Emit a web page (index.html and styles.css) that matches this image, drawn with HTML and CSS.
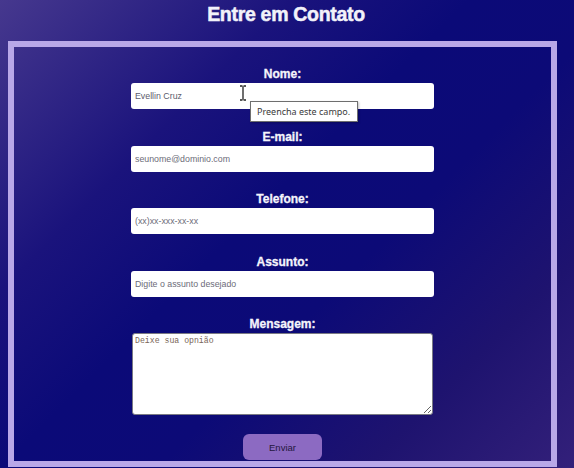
FILE: index.html
```html
<!DOCTYPE html>
<html lang="pt-BR">
<head>
<meta charset="utf-8">
<title>Entre em Contato</title>
<link rel="stylesheet" href="styles.css">
</head>
<body>
<h1 class="title">Entre em Contato</h1>
<form class="box">
  <div class="field">
    <label class="label" for="nome">Nome:</label>
    <div class="input-wrap">
      <input class="input" id="nome" type="text" value="Evellin Cruz">
      <svg class="cursor" width="8" height="16" viewBox="0 0 8 16"><path d="M1 1h2.5M4.5 1H7M4 1.5v13M1 15h2.5M4.5 15H7" stroke="#222" stroke-width="1.3" fill="none"/></svg>
      <div class="tooltip">Preencha este campo.</div>
    </div>
  </div>
  <div class="field">
    <label class="label" for="email">E-mail:</label>
    <input class="input" id="email" type="email" placeholder="seunome@dominio.com">
  </div>
  <div class="field">
    <label class="label" for="tel">Telefone:</label>
    <input class="input" id="tel" type="tel" placeholder="(xx)xx-xxx-xx-xx">
  </div>
  <div class="field">
    <label class="label" for="assunto">Assunto:</label>
    <input class="input" id="assunto" type="text" placeholder="Digite o assunto desejado">
  </div>
  <div class="field">
    <label class="label" for="msg">Mensagem:</label>
    <textarea class="textarea" id="msg" placeholder="Deixe sua opnião"></textarea>
  </div>
  <button class="button" type="submit">Enviar</button>
</form>
</body>
</html>
```
FILE: styles.css
```css
html, body {
  margin: 0;
  height: 100%;
}
body {
  background: linear-gradient(135deg, #46388e 0%, #1a137c 28%, #0b0a78 45%, #0c0a77 60%, #1e136f 80%, #33207a 100%);
  font-family: "Liberation Sans", Arial, sans-serif;
  overflow: hidden;
}
.title {
  margin: 0;
  font-size: 19.5px;
  line-height: 28px;
  font-weight: bold;
  text-align: center;
  color: #f2f2fa;
  letter-spacing: -0.3px;
  -webkit-text-stroke: 0.5px #f2f2fa;
  transform: translateX(-1px);
}
.box {
  box-sizing: border-box;
  width: 549px;
  height: 426px;
  margin: 13px 0 0 8px;
  border: 6px solid #b9a8e8;
  padding-top: 18px;
  display: flex;
  flex-direction: column;
  align-items: center;
}
.field {
  display: flex;
  flex-direction: column;
  align-items: center;
  margin-bottom: 18.5px;
}
.label {
  font-weight: bold;
  font-size: 12px;
  line-height: 18px;
  color: #f4f4fb;
  -webkit-text-stroke: 0.3px #f4f4fb;
}
.input-wrap {
  position: relative;
}
.input {
  box-sizing: border-box;
  width: 303px;
  height: 26px;
  border: none;
  border-radius: 3px;
  background: #fff;
  padding: 0 4px;
  font-family: "Liberation Sans", Arial, sans-serif;
  font-size: 8.8px;
  color: #5c5c6c;
  outline: none;
  display: block;
}
.input::placeholder {
  color: #6c6c78;
}
.cursor {
  position: absolute;
  left: 108px;
  top: 2px;
}
.tooltip {
  position: absolute;
  left: 119px;
  top: 18px;
  box-sizing: border-box;
  width: 108px;
  height: 21px;
  background: #fff;
  border: 1px solid #6e6e6e;
  font-family: "Noto Sans", "Open Sans", sans-serif;
  font-size: 9px;
  line-height: 19px;
  color: #3a3a3a;
  padding-left: 6px;
  box-shadow: 1px 1px 2px rgba(0,0,0,0.25);
  white-space: nowrap;
}
.textarea {
  box-sizing: border-box;
  width: 301px;
  height: 82px;
  border: 1px solid #7a7a84;
  border-radius: 3px;
  background: #fff;
  font-family: "Liberation Mono", monospace;
  font-size: 8.2px;
  padding: 2px 2px;
  color: #444;
  display: block;
  margin: 0;
}
.textarea::placeholder {
  color: #7a6658;
}
.button {
  margin-top: 0.5px;
  width: 79px;
  height: 26px;
  border: none;
  border-radius: 6px;
  background: #8c6ac2;
  color: #24163e;
  font-family: "Liberation Sans", Arial, sans-serif;
  font-size: 9.5px;
  cursor: pointer;
}
```
